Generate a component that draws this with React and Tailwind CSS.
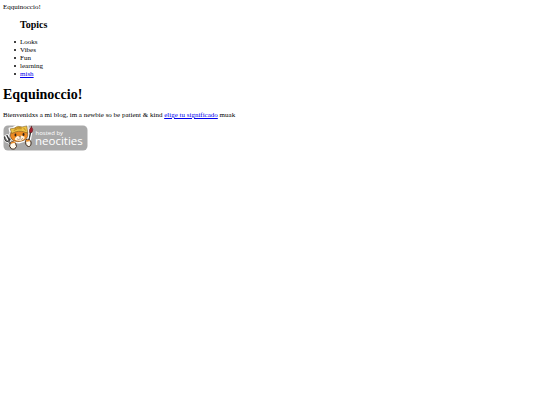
import React from "react";

const topics = ["Looks", "Vibes", "Fun", "learning"];

const NeocitiesBadge = () => {
  return (
    <svg width="85" height="26" viewBox="0 0 170 52" role="img" aria-label="hosted by neocities">
      <rect x="1" y="1" width="168" height="50" rx="9" fill="#a9a9a9" />

      {/* fork */}
      <g strokeLinecap="round" strokeLinejoin="round" fill="none">
        <path d="M3 24l4 8M8 21l4 8M3 24q2 11 8 8M14 20q3 8-3 12l6 9" stroke="#fff" strokeWidth="6" />
        <path d="M3 24l4 8M8 21l4 8M3 24q2 11 8 8M14 20q3 8-3 12l6 9" stroke="#333" strokeWidth="3" />
        <path d="M4 26q2 7 7 6l6 9" stroke="#bbb" strokeWidth="1" />
      </g>

      {/* brush */}
      <g strokeLinecap="round">
        <path d="M56 8L51 34" stroke="#fff" strokeWidth="8" />
        <path d="M55 15L51 32" stroke="#333" strokeWidth="3" />
        <path d="M57 3q5 6 1 12h-5q-2-6 4-12z" fill="#a51d2d" stroke="#4a1515" strokeWidth="1" />
      </g>

      {/* cat head */}
      <g transform="translate(4 -1) scale(0.95)">
        <path
          d="M12 17L10 9l7-1Q24 1 35 3l12-1 1 16q2 8-3 13-10 9-23 5-9-4-10-12z"
          fill="#fff"
          stroke="#fff"
          strokeWidth="5"
          strokeLinejoin="round"
        />
        <path
          d="M12 17q-3 10 4 16 10 6 22 1 11-4 10-14l-3-9-16-4z"
          fill="#ed8b22"
          stroke="#4a3015"
          strokeWidth="1"
        />
        <path d="M26 24q4 2 8-1l7 3q2 5-7 8-9 1-13-2-2-3 5-8z" fill="#fff4df" />
        <path d="M14 19L11 9l8-1Q26 1 36 5l10-2 2 15-7-2q-12-5-27 3z" fill="#efc344" stroke="#5b421a" strokeWidth="1" />
        <path d="M18 13q8-6 17-4M20 9q8-5 15-2M39 7l5 6" fill="none" stroke="#b9831f" strokeWidth="2" />
        <ellipse cx="22" cy="22" rx="2" ry="3" fill="#2c211b" />
        <ellipse cx="39" cy="21" rx="2" ry="3" fill="#2c211b" />
        <path d="M29 25h5l-2 3z" fill="#3b211a" />
        <path d="M25 30q4 3 7 0 3 3 6-1" fill="none" stroke="#653519" strokeWidth="1" />
      </g>

      {/* paws */}
      <path d="M15 35q5-4 10 1l2 7q-3 8-10 5-7-5-2-13z" fill="#fff8eb" stroke="#39291d" strokeWidth="2" />
      <path d="M15 36q2-4 8-3l3 4q-6-2-9 1z" fill="#e98c28" />
      <path d="M46 29q8-2 10 5 1 9-5 9-8-2-5-14z" fill="#fff8eb" stroke="#39291d" strokeWidth="2" />
      <path d="M46 30q6-3 9 3-4-1-8 1z" fill="#e98c28" />

      <text x="65" y="20" fontSize="12" fill="#fff" className="font-['Open_Sans',sans-serif]">
        hosted by
      </text>
      <text x="64" y="40" fontSize="23" fill="#fff" className="font-['Open_Sans',sans-serif]">
        neocities
      </text>
    </svg>
  );
};

const App = () => {
  return (
    <div className="min-h-screen bg-white px-[3px] py-[3px] font-['Liberation_Serif',serif] text-[7px] leading-[8px] text-black">
      <div>Eqquinoccio!</div>

      <nav className="mt-2">
        <h2 className="pl-[17px] text-[10px] leading-3 font-bold">Topics</h2>
        <ul className="mt-[7px] pl-[11px] [&>li]:flex [&>li]:items-center [&>li]:gap-1 [&>li]:before:size-[2px] [&>li]:before:rounded-full [&>li]:before:bg-black [&>li]:before:content-['']">
          {topics.map((topic) => (
            <li key={topic}>{topic}</li>
          ))}
          <li>
            <a href="#mish" className="text-[#0000ee] underline">
              mish
            </a>
          </li>
        </ul>
      </nav>

      <h1 className="mt-2 text-[14px] leading-[18px] font-bold">Eqquinoccio!</h1>

      <p className="mt-[7px]">
        Bienvenidxs a mi blog, im a newbie so be patient &amp; kind{" "}
        <a href="#significado" className="text-[#0000ee] underline">
          elige tu significado
        </a>{" "}
        muak
      </p>

      <a href="#neocities" className="mt-[6px] inline-block">
        <NeocitiesBadge />
      </a>
    </div>
  );
};

export default App;
